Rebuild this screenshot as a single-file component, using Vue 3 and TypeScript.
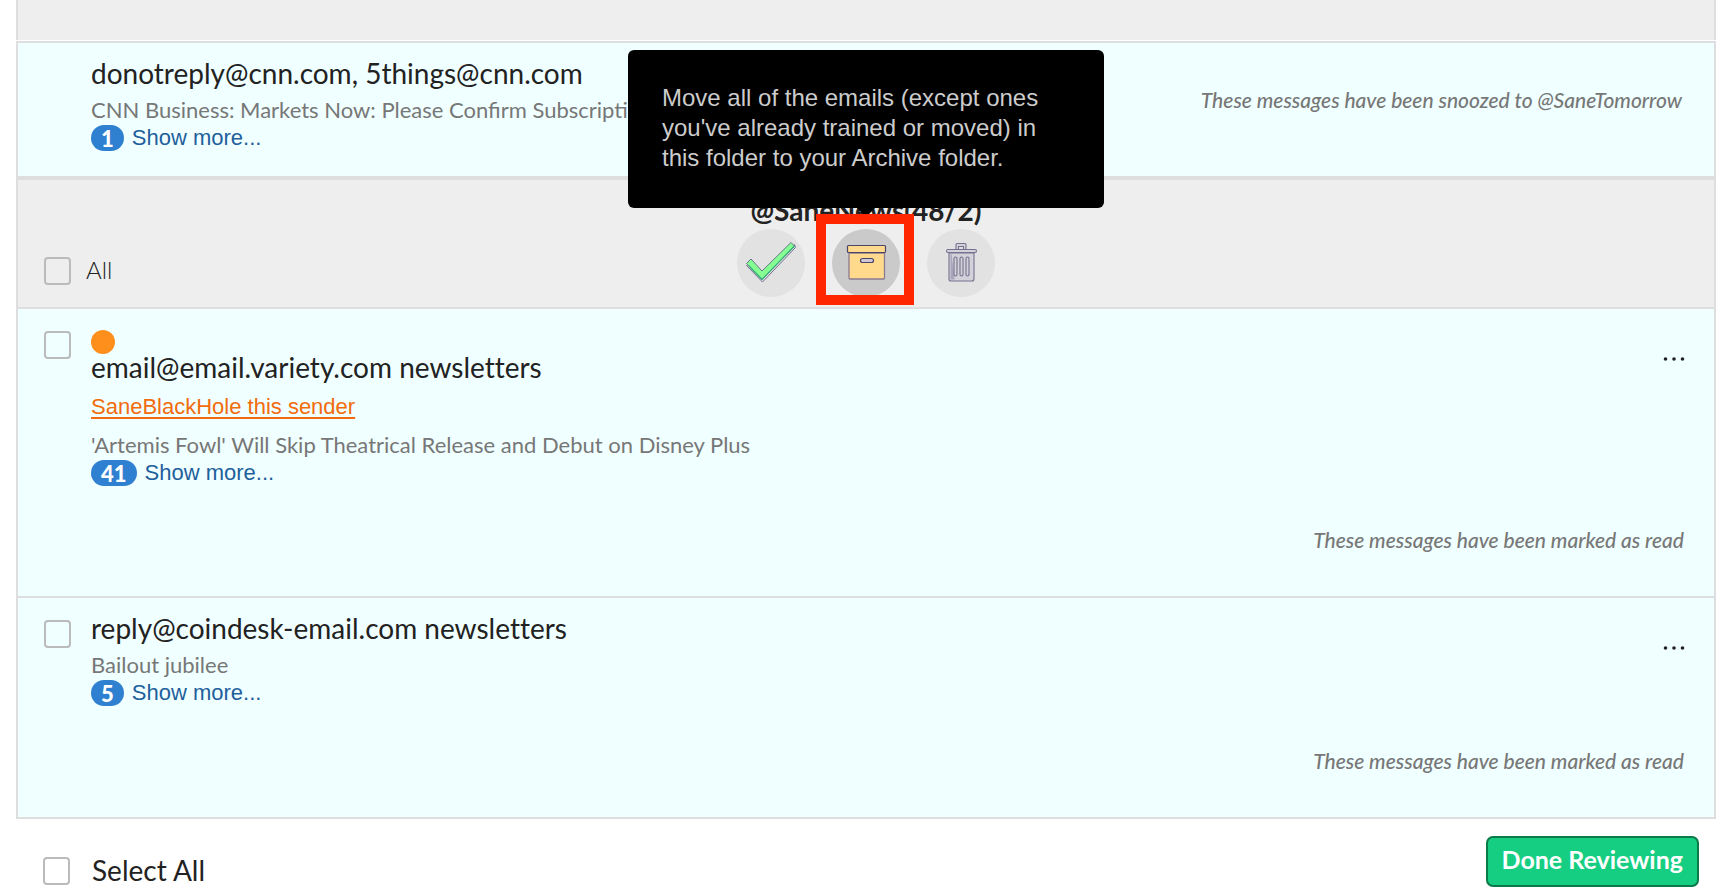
<script setup lang="ts">
import { ref } from 'vue'

interface Sender {
  id: string
  title: string
  subject: string
  count: number
  status: string
  flagged?: boolean
}

const snoozed: Sender = {
  id: 'cnn',
  title: 'donotreply@cnn.com, 5things@cnn.com',
  subject: 'CNN Business: Markets Now: Please Confirm Subscription',
  count: 1,
  status: 'These messages have been snoozed to @SaneTomorrow',
}

const senders: Sender[] = [
  {
    id: 'variety',
    title: 'email@email.variety.com newsletters',
    subject: "'Artemis Fowl' Will Skip Theatrical Release and Debut on Disney Plus",
    count: 41,
    status: 'These messages have been marked as read',
    flagged: true,
  },
  {
    id: 'coindesk',
    title: 'reply@coindesk-email.com newsletters',
    subject: 'Bailout jubilee',
    count: 5,
    status: 'These messages have been marked as read',
  },
]

const selected = ref<string[]>([])
const folderAll = ref(false)
const selectAll = ref(false)
</script>

<template>
  <main class="digest">
    <div class="previous-folder"></div>

    <section class="messages">
      <article class="row row-snoozed">
        <div class="details">
          <h3 class="sender">{{ snoozed.title }}</h3>
          <p class="subject">{{ snoozed.subject }}</p>
          <div class="more">
            <span class="badge">{{ snoozed.count }}</span>
            <a class="more-link" href="#">Show more...</a>
          </div>
        </div>
        <p class="status">{{ snoozed.status }}</p>
      </article>

      <header class="folder">
        <label class="folder-all">
          <input v-model="folderAll" type="checkbox" class="check" />
          <span>All</span>
        </label>
        <div class="folder-center">
          <h2 class="folder-name">@SaneNews(48/2)</h2>
          <div class="actions">
            <button class="action" type="button" aria-label="Mark all as read">
              <svg viewBox="0 0 68 68" aria-hidden="true">
                <path d="M9.500 36.500l16 16.500 33-34.500-1-3-32 31.500-12-13z" fill="#e1e1e1" stroke="#77718f" stroke-width="1" />
                <path d="M9.500 34.500l4.500-4.500 11 12 29-28.500 3.500 3.500-32.500 33.500z" fill="#86ff92" stroke="#66758c" stroke-width="1" />
                <path d="M12 37l13 13.500 32.500-33.500" fill="none" stroke="#2fae78" stroke-width="1.200" />
              </svg>
            </button>
            <div class="action-slot">
              <button class="action action-active" type="button" aria-label="Archive all" aria-describedby="archive-tip">
                <svg viewBox="0 0 68 68" aria-hidden="true">
                  <rect x="17" y="24" width="35.500" height="26" rx="1" fill="#ffda8c" stroke="#8a7a90" stroke-width="1.300" />
                  <rect x="15.500" y="16.500" width="38" height="7" rx="1" fill="#ffda8c" stroke="#4c4468" stroke-width="1.200" />
                  <rect x="28.500" y="29.500" width="13" height="4" rx="2" fill="#cfc9d6" stroke="#4c4468" stroke-width="1.200" />
                </svg>
              </button>
              <div class="highlight"></div>
              <div id="archive-tip" class="tooltip" role="tooltip">
                Move all of the emails (except ones you've already trained or moved) in this folder to your Archive folder.
              </div>
            </div>
            <button class="action" type="button" aria-label="Delete all">
              <svg viewBox="0 0 68 68" aria-hidden="true">
                <g fill="#d3d2da" stroke="#77718f" stroke-width="1.100">
                  <path d="M29 20.500v-5q0-1 1-1h8q1 0 1 1v5h-2.500v-3h-5v3z" />
                  <path d="M22 24h25v26a2 2 0 0 1-2 2H24a2 2 0 0 1-2-2z" />
                  <path d="M23.500 24.500v25q0 1 1 1h3l-3-26z" fill="#a9a5ba" stroke="none" />
                  <rect x="19.500" y="20.500" width="30" height="3" rx="1.500" />
                  <rect x="27" y="28" width="3" height="19" rx="1.500" />
                  <rect x="33" y="28" width="3" height="19" rx="1.500" />
                  <rect x="39" y="28" width="3" height="19" rx="1.500" />
                </g>
              </svg>
            </button>
          </div>
        </div>
      </header>

      <article
        v-for="sender in senders"
        :key="sender.id"
        class="row"
        :class="{ 'row-flagged': sender.flagged }"
      >
        <input
          v-model="selected"
          type="checkbox"
          class="check"
          :value="sender.id"
          :aria-label="`Select ${sender.title}`"
        />
        <div class="details">
          <span v-if="sender.flagged" class="dot"></span>
          <h3 class="sender">{{ sender.title }}</h3>
          <a v-if="sender.flagged" class="black-hole" href="#">SaneBlackHole this sender</a>
          <p class="subject">{{ sender.subject }}</p>
          <div class="more">
            <span class="badge">{{ sender.count }}</span>
            <a class="more-link" href="#">Show more...</a>
          </div>
        </div>
        <div class="side">
          <button class="menu" type="button" :aria-label="`Options for ${sender.title}`">
            <svg viewBox="0 0 24 8" aria-hidden="true">
              <circle cx="3.500" cy="4" r="1.800" />
              <circle cx="12" cy="4" r="1.800" />
              <circle cx="20.500" cy="4" r="1.800" />
            </svg>
          </button>
          <p class="status">{{ sender.status }}</p>
        </div>
      </article>
    </section>

    <footer class="footer">
      <label class="select-all">
        <input v-model="selectAll" type="checkbox" class="check" />
        <span>Select All</span>
      </label>
      <button class="done" type="button">Done Reviewing</button>
    </footer>
  </main>
</template>

<style>
body {
  margin: 0;
  background: #fff;
}
</style>

<style scoped>
.digest {
  padding: 0 16px;
  font-family: Lato, 'Liberation Sans', sans-serif;
  color: #222;
}
.digest * {
  box-sizing: border-box;
}
h2,
h3,
p {
  margin: 0;
}
.previous-folder {
  height: 40px;
  margin-bottom: 1px;
  background: #eee;
  border: solid #dedede;
  border-width: 0 2px;
}
.messages {
  border: 2px solid #dedede;
}
.row {
  display: flex;
  padding: 13px 30px 42px 26px;
  background: #f0ffff;
  min-height: 219px;
}
.row + .row {
  border-top: 2px solid #dedede;
  min-height: 221px;
}
.row-snoozed {
  min-height: 133px;
  padding: 13px 32px 24px 73px;
  justify-content: space-between;
}
.row-snoozed .status {
  padding-top: 30px;
}
.row-flagged {
  min-height: 287px;
  padding-top: 21px;
}
.row > .check {
  margin: 9px 20px 0 0;
}
.row-flagged > .check {
  margin-top: 1px;
}
.details {
  flex: 1;
  min-width: 0;
}
.sender {
  padding-bottom: 4px;
  font-size: 28px;
  line-height: 34px;
  font-weight: 400;
  font-variant-ligatures: no-common-ligatures;
}
.row-flagged .sender {
  margin-top: -4px;
}
.dot {
  display: block;
  width: 24px;
  height: 24px;
  border-radius: 50%;
  background: #ff8f1c;
}
.black-hole {
  display: block;
  width: max-content;
  margin: 7px 0 10px;
  font: 22px/24px 'Liberation Sans', Arial, sans-serif;
  color: #f26c0d;
  text-underline-offset: 3px;
}
.subject {
  font-size: 22px;
  line-height: 31px;
  color: #777;
}
.more {
  display: flex;
  align-items: center;
  gap: 8px;
  height: 26px;
}
.badge {
  display: flex;
  align-items: center;
  justify-content: center;
  height: 26px;
  padding: 2px 10px 0;
  border-radius: 13px;
  background: #2f80d0;
  color: #fff;
  font-size: 22px;
  line-height: 24px;
  font-weight: 900;
}
.more-link {
  font: 22px/24px 'Liberation Sans', Arial, sans-serif;
  color: #1f5f9c;
  text-decoration: none;
}
.side {
  display: flex;
  flex-direction: column;
  justify-content: space-between;
  align-items: flex-end;
}
.status {
  font-size: 21px;
  line-height: 28px;
  font-style: italic;
  font-weight: 500;
  color: #777;
}
.menu {
  padding: 25px 0 8px;
  margin-right: -2px;
  border: 0;
  background: none;
}
.row:not(.row-flagged) .menu {
  padding-top: 33px;
}
.menu svg {
  display: block;
  width: 24px;
  height: 8px;
  fill: #222;
}
.check {
  appearance: none;
  flex: none;
  width: 27px;
  height: 28px;
  margin: 0;
  border: 2px solid #bbb;
  border-radius: 4px;
}
.check:checked {
  background: #2f80d0;
}
.folder {
  display: grid;
  grid-template-columns: 1fr auto 1fr;
  min-height: 133px;
  padding: 16px 26px 10px;
  background: #eee;
  border: solid #dedede;
  border-width: 4px 0 2px;
}
.folder-all {
  display: flex;
  align-items: center;
  align-self: end;
  gap: 15px;
  padding-bottom: 12px;
  font-size: 24px;
  line-height: 26px;
  font-weight: 300;
}
.folder-all span {
  padding-bottom: 2px;
}
.folder-center {
  display: flex;
  flex-direction: column;
  align-items: center;
}
.folder-name {
  font-size: 28px;
  line-height: 28px;
  font-weight: 700;
}
.actions {
  display: flex;
  gap: 27px;
  margin-top: 5px;
}
.action-slot {
  position: relative;
}
.action {
  display: block;
  width: 68px;
  height: 68px;
  padding: 0;
  border: 0;
  border-radius: 50%;
  background: #e2e2e2;
}
.action-active {
  background: #cacaca;
}
.action svg {
  display: block;
  width: 68px;
  height: 68px;
}
.tooltip {
  position: absolute;
  bottom: 89px;
  left: 50%;
  width: 476px;
  margin-left: -238px;
  padding: 33px 34px 35px;
  border-radius: 6px;
  background: rgba(0, 0, 0, 0.95);
  background: #000;
  color: #ccc;
  font: 24px/30px 'Liberation Sans', Arial, sans-serif;
}
.tooltip::after {
  content: '';
  position: absolute;
  top: 100%;
  left: 50%;
  margin-left: -9px;
  border: 9px solid transparent;
  border-top-color: #000;
  border-bottom: 0;
}
.highlight {
  position: absolute;
  z-index: 1;
  inset: -15px -14px -8px -16px;
  border: 10px solid #ff2600;
  pointer-events: none;
}
.footer {
  display: flex;
  justify-content: space-between;
  align-items: flex-start;
  padding: 17px 17px 0 27px;
}
.select-all {
  display: flex;
  align-items: center;
  gap: 22px;
  padding-top: 17px;
  font-size: 28px;
  line-height: 34px;
}
.select-all span {
  padding-bottom: 2px;
}
.done {
  padding: 6px 14px 10px;
  border: 2px solid #0b7a49;
  border-radius: 7px;
  background: #16ce82;
  color: #fff;
  font: 700 25px/31px Lato, sans-serif;
}
</style>
